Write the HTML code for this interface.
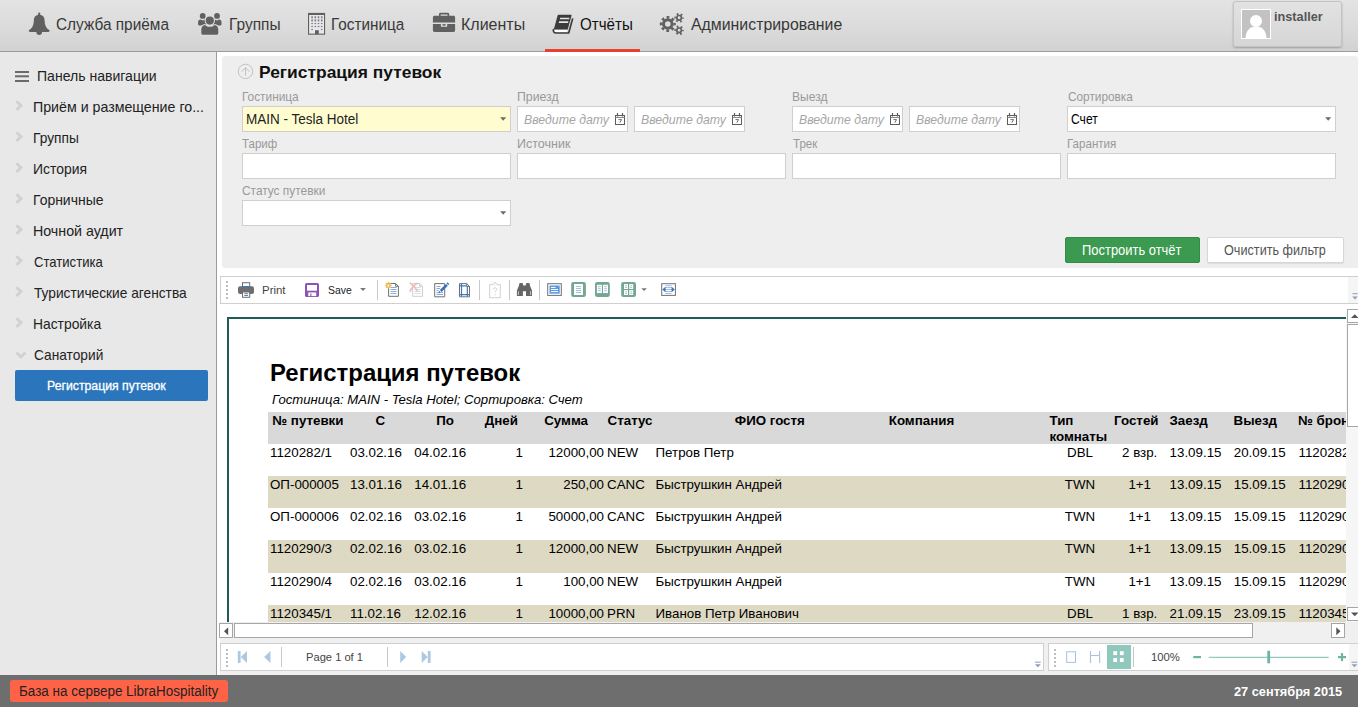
<!DOCTYPE html>
<html lang="ru">
<head>
<meta charset="utf-8">
<title>Регистрация путевок</title>
<style>
html,body{margin:0;padding:0;}
body{width:1358px;height:707px;position:relative;overflow:hidden;background:#fff;font-family:"Liberation Sans",sans-serif;}
.a{position:absolute;box-sizing:border-box;}
.t{position:absolute;white-space:nowrap;line-height:1;transform-origin:0 50%;display:inline-block;}
svg{position:absolute;overflow:visible;}
#topbar{left:0;top:0;width:1358px;height:51px;background:linear-gradient(#e3e3e3,#dcdcdc 50%,#d2d2d2);}
#topline{left:0;top:51px;width:1358px;height:1px;background:#9a9a9a;}
#side{left:0;top:52px;width:216px;height:623px;background:#e8e8e8;}
#sidesep{left:216px;top:52px;width:1px;height:623px;background:#9b9b9b;}
#panel{left:222px;top:56px;width:1136px;height:212px;background:#eeeeee;border-radius:3px 3px 0 3px;}
.inp{background:#fff;border:1px solid #cfcfcf;height:26px;}
.btn{height:25px;border-radius:2px;}
#tb1{left:220px;top:276px;width:1140px;height:28px;background:#fff;border:1px solid #cfcfcf;}
#tbr{left:1348px;top:277px;width:10px;height:26px;background:#f5f5f5;}
#repwrap{left:220px;top:305px;width:1126px;height:317px;background:#fff;overflow:hidden;}
#rep{position:absolute;left:-220px;top:-305px;width:1600px;height:800px;}
#footer{left:0;top:675px;width:1358px;height:32px;background:#6e6e6e;}
.sep{width:1px;background:#c8c8c8;}
.grip{width:2px;background-image:linear-gradient(#bdbdbd 50%,transparent 50%);background-size:2px 4px;}
</style>
</head>
<body>
<div class="a" id="topbar"></div>
<div class="a" id="topline"></div>
<div class="a" style="left:545px;top:49px;width:95px;height:3px;background:#e8402f;"></div>
<div class="a" id="side"></div>
<div class="a" id="sidesep"></div>
<div class="a" id="panel"></div>

<!-- user box -->
<div class="a" style="left:1233px;top:1px;width:109px;height:46px;border:1px solid #c4c4c4;border-radius:3px;background:linear-gradient(#e2e2e2,#d6d6d6);box-shadow:0 1px 2px rgba(0,0,0,.25);"></div>
<div class="a" style="left:1241px;top:9px;width:30px;height:30px;background:#c2c2c2;border:1px solid #fff;overflow:hidden;">
<svg width="28" height="28" viewBox="0 0 28 28" style="left:0;top:0"><circle cx="14" cy="11" r="6" fill="#fff"/><path d="M3.5 28 C4 19 9 16.5 14 16.5 C19 16.5 24 19 24.500 28 Z" fill="#fff"/></svg>
</div>

<!-- sidebar selected -->
<div class="a" style="left:15px;top:370px;width:193px;height:31px;background:#2a75bb;border-radius:2px;"></div>

<!-- inputs -->
<div class="a inp" style="left:242px;top:106px;width:269px;background:#fffdd0;"></div>
<div class="a inp" style="left:517px;top:106px;width:111px;"></div>
<div class="a inp" style="left:634px;top:106px;width:111px;"></div>
<div class="a inp" style="left:792px;top:106px;width:111px;"></div>
<div class="a inp" style="left:909px;top:106px;width:111px;"></div>
<div class="a inp" style="left:1067px;top:106px;width:269px;"></div>
<div class="a inp" style="left:242px;top:153px;width:269px;"></div>
<div class="a inp" style="left:517px;top:153px;width:269px;"></div>
<div class="a inp" style="left:792px;top:153px;width:269px;"></div>
<div class="a inp" style="left:1067px;top:153px;width:269px;"></div>
<div class="a inp" style="left:242px;top:200px;width:269px;"></div>
<div class="a btn" style="left:1065px;top:237px;height:26px;width:135px;background:#3c9a50;border:1px solid #348a46;"></div>
<div class="a btn" style="left:1207px;top:237px;height:26px;width:137px;background:#fff;border:1px solid #d6d6d6;box-shadow:0 1px 1px rgba(0,0,0,.08);"></div>

<!-- toolbar -->
<div class="a" id="tb1"></div>
<div class="a" id="tbr"></div>

<!-- report -->
<div class="a" id="repwrap"><div id="rep">
<div class="a" style="left:227px;top:317px;width:1300px;height:400px;border:2px solid #1f5c54;background:#fff;"></div>
<div class="a" style="left:268px;top:412px;width:1200px;height:32px;background:#d9d9d9;"></div>
<div class="a" style="left:268px;top:476px;width:1200px;height:32px;background:#ddd9c3;"></div>
<div class="a" style="left:268px;top:540px;width:1200px;height:33px;background:#ddd9c3;"></div>
<div class="a" style="left:268px;top:605px;width:1200px;height:32px;background:#ddd9c3;"></div>
<span class="t" style="left:269.99px;top:361.00px;font-size:24px;color:#000;font-weight:700;transform:scaleX(0.9959);">Регистрация путевок</span>
<span class="t" style="left:271.88px;top:393.00px;font-size:13.333px;color:#000;font-style:italic;transform:scaleX(0.9841);">Гостиница: MAIN - Tesla Hotel; Сортировка: Счет</span>
<span class="t" style="left:272.30px;top:414.00px;font-size:13.333px;color:#000;font-weight:700;">№ путевки</span>
<span class="t" style="left:375.38px;top:414.00px;font-size:13.333px;color:#000;font-weight:700;">С</span>
<span class="t" style="left:436.13px;top:414.00px;font-size:13.333px;color:#000;font-weight:700;">По</span>
<span class="t" style="left:484.84px;top:414.00px;font-size:13.333px;color:#000;font-weight:700;">Дней</span>
<span class="t" style="left:544.17px;top:414.00px;font-size:13.333px;color:#000;font-weight:700;">Сумма</span>
<span class="t" style="left:607.60px;top:414.00px;font-size:13.333px;color:#000;font-weight:700;">Статус</span>
<span class="t" style="left:734.75px;top:414.00px;font-size:13.333px;color:#000;font-weight:700;">ФИО гостя</span>
<span class="t" style="left:888.77px;top:414.00px;font-size:13.333px;color:#000;font-weight:700;">Компания</span>
<span class="t" style="left:1049.50px;top:414.00px;font-size:13.333px;color:#000;font-weight:700;">Тип</span>
<span class="t" style="left:1049.50px;top:430.00px;font-size:13.333px;color:#000;font-weight:700;">комнаты</span>
<span class="t" style="left:1114.09px;top:414.00px;font-size:13.333px;color:#000;font-weight:700;">Гостей</span>
<span class="t" style="left:1169.50px;top:414.00px;font-size:13.333px;color:#000;font-weight:700;">Заезд</span>
<span class="t" style="left:1233.50px;top:414.00px;font-size:13.333px;color:#000;font-weight:700;">Выезд</span>
<span class="t" style="left:1298.00px;top:414.00px;font-size:13.333px;color:#000;font-weight:700;">№ брони</span>
<span class="t" style="left:270.00px;top:446.00px;font-size:13.333px;color:#000;">1120282/1</span>
<span class="t" style="left:350.00px;top:446.00px;font-size:13.333px;color:#000;">03.02.16</span>
<span class="t" style="left:414.30px;top:446.00px;font-size:13.333px;color:#000;">04.02.16</span>
<span class="t" style="left:515.58px;top:446.00px;font-size:13.333px;color:#000;">1</span>
<span class="t" style="left:548.41px;top:446.00px;font-size:13.333px;color:#000;">12000,00</span>
<span class="t" style="left:607.00px;top:446.00px;font-size:13.333px;color:#000;">NEW</span>
<span class="t" style="left:655.50px;top:446.00px;font-size:13.333px;color:#000;">Петров Петр</span>
<span class="t" style="left:1067.03px;top:446.00px;font-size:13.333px;color:#000;">DBL</span>
<span class="t" style="left:1122.06px;top:446.00px;font-size:13.333px;color:#000;">2 взр.</span>
<span class="t" style="left:1169.60px;top:446.00px;font-size:13.333px;color:#000;">13.09.15</span>
<span class="t" style="left:1233.80px;top:446.00px;font-size:13.333px;color:#000;">20.09.15</span>
<span class="t" style="left:1298.50px;top:446.00px;font-size:13.333px;color:#000;">1120282</span>
<span class="t" style="left:270.00px;top:478.00px;font-size:13.333px;color:#000;">ОП-000005</span>
<span class="t" style="left:350.00px;top:478.00px;font-size:13.333px;color:#000;">13.01.16</span>
<span class="t" style="left:414.30px;top:478.00px;font-size:13.333px;color:#000;">14.01.16</span>
<span class="t" style="left:515.58px;top:478.00px;font-size:13.333px;color:#000;">1</span>
<span class="t" style="left:563.23px;top:478.00px;font-size:13.333px;color:#000;">250,00</span>
<span class="t" style="left:607.00px;top:478.00px;font-size:13.333px;color:#000;">CANC</span>
<span class="t" style="left:655.50px;top:478.00px;font-size:13.333px;color:#000;">Быструшкин Андрей</span>
<span class="t" style="left:1064.82px;top:478.00px;font-size:13.333px;color:#000;">TWN</span>
<span class="t" style="left:1128.40px;top:478.00px;font-size:13.333px;color:#000;">1+1</span>
<span class="t" style="left:1169.60px;top:478.00px;font-size:13.333px;color:#000;">13.09.15</span>
<span class="t" style="left:1233.80px;top:478.00px;font-size:13.333px;color:#000;">15.09.15</span>
<span class="t" style="left:1298.50px;top:478.00px;font-size:13.333px;color:#000;">1120290</span>
<span class="t" style="left:270.00px;top:510.00px;font-size:13.333px;color:#000;">ОП-000006</span>
<span class="t" style="left:350.00px;top:510.00px;font-size:13.333px;color:#000;">02.02.16</span>
<span class="t" style="left:414.30px;top:510.00px;font-size:13.333px;color:#000;">03.02.16</span>
<span class="t" style="left:515.58px;top:510.00px;font-size:13.333px;color:#000;">1</span>
<span class="t" style="left:548.41px;top:510.00px;font-size:13.333px;color:#000;">50000,00</span>
<span class="t" style="left:607.00px;top:510.00px;font-size:13.333px;color:#000;">CANC</span>
<span class="t" style="left:655.50px;top:510.00px;font-size:13.333px;color:#000;">Быструшкин Андрей</span>
<span class="t" style="left:1064.82px;top:510.00px;font-size:13.333px;color:#000;">TWN</span>
<span class="t" style="left:1128.40px;top:510.00px;font-size:13.333px;color:#000;">1+1</span>
<span class="t" style="left:1169.60px;top:510.00px;font-size:13.333px;color:#000;">13.09.15</span>
<span class="t" style="left:1233.80px;top:510.00px;font-size:13.333px;color:#000;">15.09.15</span>
<span class="t" style="left:1298.50px;top:510.00px;font-size:13.333px;color:#000;">1120290</span>
<span class="t" style="left:270.00px;top:542.00px;font-size:13.333px;color:#000;">1120290/3</span>
<span class="t" style="left:350.00px;top:542.00px;font-size:13.333px;color:#000;">02.02.16</span>
<span class="t" style="left:414.30px;top:542.00px;font-size:13.333px;color:#000;">03.02.16</span>
<span class="t" style="left:515.58px;top:542.00px;font-size:13.333px;color:#000;">1</span>
<span class="t" style="left:548.41px;top:542.00px;font-size:13.333px;color:#000;">12000,00</span>
<span class="t" style="left:607.00px;top:542.00px;font-size:13.333px;color:#000;">NEW</span>
<span class="t" style="left:655.50px;top:542.00px;font-size:13.333px;color:#000;">Быструшкин Андрей</span>
<span class="t" style="left:1064.82px;top:542.00px;font-size:13.333px;color:#000;">TWN</span>
<span class="t" style="left:1128.40px;top:542.00px;font-size:13.333px;color:#000;">1+1</span>
<span class="t" style="left:1169.60px;top:542.00px;font-size:13.333px;color:#000;">13.09.15</span>
<span class="t" style="left:1233.80px;top:542.00px;font-size:13.333px;color:#000;">15.09.15</span>
<span class="t" style="left:1298.50px;top:542.00px;font-size:13.333px;color:#000;">1120290</span>
<span class="t" style="left:270.00px;top:575.00px;font-size:13.333px;color:#000;">1120290/4</span>
<span class="t" style="left:350.00px;top:575.00px;font-size:13.333px;color:#000;">02.02.16</span>
<span class="t" style="left:414.30px;top:575.00px;font-size:13.333px;color:#000;">03.02.16</span>
<span class="t" style="left:515.58px;top:575.00px;font-size:13.333px;color:#000;">1</span>
<span class="t" style="left:563.23px;top:575.00px;font-size:13.333px;color:#000;">100,00</span>
<span class="t" style="left:607.00px;top:575.00px;font-size:13.333px;color:#000;">NEW</span>
<span class="t" style="left:655.50px;top:575.00px;font-size:13.333px;color:#000;">Быструшкин Андрей</span>
<span class="t" style="left:1064.82px;top:575.00px;font-size:13.333px;color:#000;">TWN</span>
<span class="t" style="left:1128.40px;top:575.00px;font-size:13.333px;color:#000;">1+1</span>
<span class="t" style="left:1169.60px;top:575.00px;font-size:13.333px;color:#000;">13.09.15</span>
<span class="t" style="left:1233.80px;top:575.00px;font-size:13.333px;color:#000;">15.09.15</span>
<span class="t" style="left:1298.50px;top:575.00px;font-size:13.333px;color:#000;">1120290</span>
<span class="t" style="left:270.00px;top:607.00px;font-size:13.333px;color:#000;">1120345/1</span>
<span class="t" style="left:350.00px;top:607.00px;font-size:13.333px;color:#000;">11.02.16</span>
<span class="t" style="left:414.30px;top:607.00px;font-size:13.333px;color:#000;">12.02.16</span>
<span class="t" style="left:515.58px;top:607.00px;font-size:13.333px;color:#000;">1</span>
<span class="t" style="left:548.41px;top:607.00px;font-size:13.333px;color:#000;">10000,00</span>
<span class="t" style="left:607.00px;top:607.00px;font-size:13.333px;color:#000;">PRN</span>
<span class="t" style="left:655.50px;top:607.00px;font-size:13.333px;color:#000;">Иванов Петр Иванович</span>
<span class="t" style="left:1067.03px;top:607.00px;font-size:13.333px;color:#000;">DBL</span>
<span class="t" style="left:1122.06px;top:607.00px;font-size:13.333px;color:#000;">1 взр.</span>
<span class="t" style="left:1169.60px;top:607.00px;font-size:13.333px;color:#000;">21.09.15</span>
<span class="t" style="left:1233.80px;top:607.00px;font-size:13.333px;color:#000;">23.09.15</span>
<span class="t" style="left:1298.50px;top:607.00px;font-size:13.333px;color:#000;">1120345</span>
</div></div>

<!-- footer -->
<div class="a" id="footer"></div>
<div class="a" style="left:10px;top:680px;width:218px;height:22px;background:#ff6347;border-radius:3px;"></div>

<!-- ===== top nav icons ===== -->
<svg width="1358" height="52" viewBox="0 0 1358 52" style="left:0;top:0">
<g fill="#606060">
<!-- bell -->
<path d="M39.2 12.6c.6 0 1 .4 1 1v1.100c2.800 .5 4.400 2.600 4.400 5.600c0 5 1.600 8 5.100 10.200c0 .8-.6 1.400-1.400 1.400h-6.200c0 1.700-1.300 3-2.900 3s-2.900-1.300-2.900-3h-6.200c-.8 0-1.400-.6-1.400-1.400c3.500-2.200 5.100-5.200 5.100-10.200c0-3 1.600-5.100 4.400-5.600v-1.100c0-.6 .4-1 1-1z"/>
<!-- users -->
<circle cx="202.700" cy="15.900" r="2.900"/><circle cx="217" cy="15.900" r="2.900"/>
<path d="M198.100 24.200v-2c0-1.500 1-2.500 2.300-2.600c.7 .5 1.500 .8 2.300 .8s1.600-.3 2.300-.8c.5 0 1 .2 1.400 .5v5.500h-6.800c-.9 0-1.500-.6-1.500-1.400z"/>
<path d="M221.500 24.200v-2c0-1.500-1-2.500-2.300-2.600c-.7 .5-1.500 .8-2.300 .8s-1.600-.3-2.300-.8c-.5 0-1 .2-1.400 .5v5.500h6.800c.9 0 1.500-.6 1.500-1.400z"/>
<circle cx="209.800" cy="20.600" r="5.200" fill="#dedede"/>
<path d="M200.300 33v-3.500c0-3.300 1.800-5.400 4.700-5.600c1.300 1.200 3 1.900 4.800 1.900s3.500-.7 4.800-1.900c2.900 .2 4.700 2.300 4.700 5.600v3.500c0 1.800-1.200 2.800-2.900 2.800h-13.200c-1.700 0-2.900-1-2.900-2.800z" fill="#dedede"/>
<circle cx="209.800" cy="20.600" r="4.100"/>
<path d="M201.300 32.900v-3.200c0-2.800 1.400-4.500 3.600-4.800c1.300 1.200 3.100 1.900 4.900 1.900s3.600-.7 4.900-1.900c2.200 .3 3.600 2 3.600 4.800v3.200c0 1.200-.8 1.900-2 1.900h-13c-1.200 0-2-.7-2-1.900z"/>
<!-- building -->
<rect x="308" y="12.900" width="17.100" height="21.800" />
<rect x="309.100" y="15" width="14.900" height="18.600" fill="#e9e9e9"/>
<g fill="#7a7a8a">
<rect x="311.300" y="16.300" width="1.600" height="2"/><rect x="314.500" y="16.300" width="1.600" height="2"/><rect x="317.700" y="16.300" width="1.600" height="2"/><rect x="320.900" y="16.300" width="1.600" height="2"/>
<rect x="311.300" y="19.400" width="1.600" height="2"/><rect x="314.500" y="19.400" width="1.600" height="2"/><rect x="317.700" y="19.400" width="1.600" height="2"/><rect x="320.900" y="19.400" width="1.600" height="2"/>
<rect x="311.300" y="22.900" width="1.600" height="1.200"/><rect x="314.500" y="22.900" width="1.600" height="1.200"/><rect x="317.700" y="22.900" width="1.600" height="1.200"/><rect x="320.900" y="22.900" width="1.600" height="1.200"/>
<rect x="311.300" y="25.900" width="1.600" height="1.200"/><rect x="314.500" y="25.900" width="1.600" height="1.200"/><rect x="317.700" y="25.900" width="1.600" height="1.200"/><rect x="320.900" y="25.900" width="1.600" height="1.200"/>
<rect x="311.300" y="28.900" width="1.600" height="1.200"/><rect x="320.900" y="28.900" width="1.600" height="1.200"/>
</g>
<rect x="315" y="30.200" width="3.800" height="4"/>
<!-- briefcase -->
<path d="M439 16v-1.800c0-.8 .6-1.400 1.400-1.400h7.400c.8 0 1.400 .6 1.400 1.400v1.800h-1.600v-1.100c0-.2-.1-.3-.3-.3h-6.400c-.2 0-.3 .1-.3 .3v1.100z"/>
<path d="M434.500 15.700h19c.9 0 1.600 .7 1.600 1.600v5.300h-22.200v-5.300c0-.9 .7-1.600 1.600-1.600z"/>
<path d="M432.900 24.100h8v2.700h6.300v-2.700h7.900v6.200c0 .9-.7 1.600-1.600 1.600h-19c-.9 0-1.600-.7-1.600-1.600z"/>
<rect x="442.500" y="24.100" width="3.100" height="1.500"/>
<!-- cogs -->
<g fill="none" stroke="#606060">
<circle cx="667.800" cy="24" r="4.300" stroke-width="3"/>
<circle cx="667.800" cy="24" r="6.700" stroke-width="2.600" stroke-dasharray="2.700 2.562" stroke-dashoffset="1.350"/>
<circle cx="679.100" cy="17.800" r="2.300" stroke-width="1.700"/>
<circle cx="679.100" cy="17.800" r="3.800" stroke-width="2" stroke-dasharray="1.700 2.279" stroke-dashoffset=".85"/>
<circle cx="679.100" cy="30.300" r="2.300" stroke-width="1.700"/>
<circle cx="679.100" cy="30.300" r="3.800" stroke-width="2" stroke-dasharray="1.700 2.279" stroke-dashoffset=".85"/>
</g>
</g>
<!-- book (active) -->
<g>
<path d="M558.400 14.800h12.400c.6 0 .9 .4 .7 1l-3.800 13.800h-13.900l3.700-13.800c.2-.6 .5-1 .9-1z" fill="#3c3c3c"/>
<path d="M560.200 17.700h9.300l-.4 1.500h-9.300z M559.200 21.200h9.300l-.5 1.800h-9.300z" fill="#e6e6e6"/>
<path d="M554.600 30h12.700l-.5 1.900h-12.200c-.9-.3-.9-1.600 0-1.900z" fill="#fff"/>
<path d="M572.700 18.400l-4 14.600h-12.400c-2.800 0-3.600-2.400-2.500-3.900" fill="none" stroke="#3c3c3c" stroke-width="1.700" stroke-linejoin="round"/>
</g>
</svg>
<svg width="216" height="400" viewBox="0 0 216 400" style="left:0;top:0">
<g fill="#6a6a6a"><rect x="15" y="71" width="14" height="2"/><rect x="15" y="75.300" width="14" height="2"/><rect x="15" y="80" width="14" height="2"/></g>
<g fill="none" stroke="#d1d1d1" stroke-width="2.800">
<path d="M16.400 101.3l4.700 4.300l-4.700 4.300"/>
<path d="M16.400 132.3l4.700 4.300l-4.700 4.300"/>
<path d="M16.400 163.3l4.700 4.300l-4.700 4.300"/>
<path d="M16.400 194.3l4.700 4.300l-4.700 4.300"/>
<path d="M16.400 225.3l4.700 4.300l-4.700 4.300"/>
<path d="M16.400 256.3l4.700 4.300l-4.700 4.300"/>
<path d="M16.400 287.3l4.700 4.300l-4.700 4.300"/>
<path d="M16.400 318.3l4.700 4.300l-4.700 4.300"/>
<path d="M16.500 352.4l4.500 4.600l4.500-4.600"/>
</g></svg>
<svg width="1358" height="270" viewBox="0 0 1358 270" style="left:0;top:0">
<g fill="none" stroke="#c2c2c2" stroke-width="1"><circle cx="245.500" cy="71.400" r="7.200"/><path d="M245.500 75.600v-7.800M241.600 71.800l3.900-4.100l3.900 4.100"/></g>
<g fill="#6a6a6a"><path d="M500.2 117.2h6l-3 3.600z"/><path d="M1325.2 117.2h6l-3 3.600z"/><path d="M500.2 211.2h6l-3 3.600z"/></g>
<g transform="translate(615 113)" fill="none" stroke="#5c5c5c" stroke-width="1"><rect x=".5" y="2.500" width="9" height="9"/><path d="M.5 4.500h9" stroke="#8a8a8a"/><path d="M2.500 0v3.500M7.500 0v3.500" stroke-width="1.200"/><path d="M3.500 6.600h3l-1.700 3.100" stroke-width=".9"/></g>
<g transform="translate(732 113)" fill="none" stroke="#5c5c5c" stroke-width="1"><rect x=".5" y="2.500" width="9" height="9"/><path d="M.5 4.500h9" stroke="#8a8a8a"/><path d="M2.500 0v3.500M7.500 0v3.500" stroke-width="1.200"/><path d="M3.500 6.600h3l-1.700 3.100" stroke-width=".9"/></g>
<g transform="translate(890 113)" fill="none" stroke="#5c5c5c" stroke-width="1"><rect x=".5" y="2.500" width="9" height="9"/><path d="M.5 4.500h9" stroke="#8a8a8a"/><path d="M2.500 0v3.500M7.500 0v3.500" stroke-width="1.200"/><path d="M3.500 6.600h3l-1.700 3.100" stroke-width=".9"/></g>
<g transform="translate(1007 113)" fill="none" stroke="#5c5c5c" stroke-width="1"><rect x=".5" y="2.500" width="9" height="9"/><path d="M.5 4.500h9" stroke="#8a8a8a"/><path d="M2.500 0v3.500M7.500 0v3.500" stroke-width="1.200"/><path d="M3.500 6.600h3l-1.700 3.100" stroke-width=".9"/></g>
</svg>
<!-- ===== top toolbar icons ===== -->
<div class="a grip" style="left:226px;top:281px;height:18px;"></div>
<div class="a sep" style="left:377px;top:280px;height:20px;"></div>
<div class="a sep" style="left:479px;top:280px;height:20px;"></div>
<div class="a sep" style="left:509px;top:280px;height:20px;"></div>
<div class="a sep" style="left:539px;top:280px;height:20px;"></div>
<svg width="700" height="30" viewBox="0 276 700 30" style="left:0;top:276px">
<!-- printer -->
<rect x="238" y="286.300" width="16" height="7.800" rx="2" fill="#6e6e6e"/>
<rect x="242.500" y="282.700" width="7.200" height="4" fill="#fff" stroke="#6e6e6e"/>
<rect x="242" y="286" width="8.200" height="1" fill="#3c78c0"/>
<rect x="242.500" y="292" width="7.200" height="5.300" fill="#fff" stroke="#6e6e6e"/>
<rect x="244.300" y="293.300" width="3.800" height=".9" fill="#3c78c0"/><rect x="244.300" y="295.100" width="3.800" height=".9" fill="#3c78c0"/>
<!-- save -->
<rect x="305" y="283" width="14" height="14" rx="1.600" fill="#8c52b4"/>
<rect x="307" y="285" width="10" height="5.700" fill="#fff"/>
<rect x="308.300" y="292.400" width="7.900" height="3.700" fill="#fff"/>
<rect x="310.300" y="293.400" width="1.100" height="2.700" fill="#8c52b4"/>
<path d="M360.100 287.900h5.800l-2.900 3.200z" fill="#777"/>
<!-- new page -->
<path d="M388.600 283.500h7l2.800 2.800v10h-9.800z" fill="#fff" stroke="#707070"/>
<path d="M395.600 283.500v2.800h2.800" fill="none" stroke="#707070"/>
<path d="M390.500 287.500h6M390.500 289.500h6M390.500 291.500h6M390.500 293.500h6" stroke="#86abe0" stroke-width="1"/>
<g stroke="#e9b84a" stroke-width="1.400"><path d="M388.400 282.100v6.600M385.100 285.400h6.600M386.100 283.100l4.600 4.600M390.700 283.100l-4.600 4.600"/></g>
<circle cx="388.400" cy="285.400" r="1" fill="#fff"/>
<!-- delete page (disabled) -->
<path d="M412.700 283.500h7l2.800 2.800v10h-9.800z" fill="#fff" stroke="#cfcfcf"/>
<path d="M419.700 283.500v2.800h2.800" fill="none" stroke="#cfcfcf"/>
<path d="M414.600 287.500h6M414.600 289.500h6M414.600 291.500h6M414.600 293.500h6" stroke="#d3def0" stroke-width="1"/>
<path d="M409.600 282.600c3 2 5.800 5 8.200 8.800M417.500 282.900c-3.600 2.200-6.200 5.200-7.700 8.900" fill="none" stroke="#f2bcb3" stroke-width="1.700"/>
<!-- edit page -->
<path d="M434.700 283.600h10v13.200h-10z" fill="#fff" stroke="#707070"/>
<path d="M436.500 286.500h4M436.500 288.500h3.500M436.500 290.500h2M436.500 292.500h2M436.500 294.500h6.500M441 292.500h2" stroke="#86abe0" stroke-width="1"/>
<path d="M447.600 282.300l1.700 1.700l-1.100 1.100l-1.700-1.700z M446 283.900l1.800 1.800l-6.200 6.200l-1.800-1.800z M439.200 290.800l1.700 1.700l-2.700 1z" fill="#3a72b8"/>
<!-- page setup -->
<path d="M459.500 283.600h7.200l2.800 2.800v10.400h-10z" fill="#fff" stroke="#707070"/>
<path d="M466.700 283.600v2.800h2.800" fill="none" stroke="#707070"/>
<path d="M461.500 284v12.500M467.300 286.500v10M460 285.800h6.500M460 294.700h9" stroke="#3c78c8" stroke-width="1.200" fill="none"/>
<!-- clipboard disabled -->
<rect x="489.700" y="284.700" width="10.600" height="13" fill="#fff" stroke="#d2d2d2"/>
<path d="M492.500 284.700c0-1 .8-1 1.300-1c0-1.600 2.400-1.600 2.400 0c.5 0 1.300 0 1.300 1" fill="#fff" stroke="#d2d2d2"/>
<path d="M493.300 289.500c0-2.200 3.400-2.200 3.400-.2c0 1.400-1.700 1.400-1.700 3.200M495 294.200v1.100" fill="none" stroke="#bccfea" stroke-width="1"/>
<!-- binoculars -->
<path d="M519.600 283h2.900l.8 2.600h2.300l.8-2.600h2.900l1 3.400l1.700 4.200v5.300h-6v-4.700h-3.100v4.700h-6v-5.300l1.700-4.200z" fill="#666"/>
<path d="M518.400 291.200v3.800M530.600 291.200v3.800" stroke="#cfcfcf" stroke-width=".9"/>
<!-- icon A -->
<rect x="547.700" y="283.700" width="13.600" height="11.700" fill="#fff" stroke="#707070"/>
<rect x="549.500" y="285.500" width="10.200" height="8.200" fill="#5b9ae0"/>
<path d="M551 287.500h4.500M551 289.500h7M551 291.600h7" stroke="#fff" stroke-width="1"/>
<!-- icon B -->
<rect x="571.200" y="282" width="14.700" height="15" rx="2.200" fill="#72a892"/>
<rect x="574" y="284" width="9" height="11" fill="#fff"/>
<path d="M576 286.500h5M576 288.500h5M576 290.500h5M576 292.500h5" stroke="#a9bfe0" stroke-width="1"/>
<!-- icon C -->
<rect x="595" y="282" width="14.800" height="15" rx="2.200" fill="#72a892"/>
<rect x="596.900" y="284.800" width="5" height="8.300" fill="#fff"/><rect x="603" y="284.800" width="5" height="8.300" fill="#fff"/>
<path d="M598 286.700h2.800M598 288.700h2.800M598 290.700h2.800M604.100 286.700h2.800M604.100 288.700h2.800M604.100 290.700h2.800" stroke="#a9bfe0" stroke-width="1"/>
<!-- icon D -->
<rect x="621.200" y="282" width="14.800" height="15" rx="2.200" fill="#72a892"/>
<rect x="624" y="284.100" width="4" height="4.900" fill="#fff"/><rect x="629.200" y="284.100" width="4" height="4.900" fill="#fff"/>
<rect x="624" y="290.100" width="4" height="4.900" fill="#fff"/><rect x="629.200" y="290.100" width="4" height="4.900" fill="#fff"/>
<path d="M625 285.800h2M625 287.500h2M630.200 285.800h2M630.200 287.500h2M625 291.800h2M625 293.500h2M630.200 291.800h2M630.200 293.500h2" stroke="#a9bfe0" stroke-width=".9"/>
<path d="M641.300 288.200h5.600l-2.800 2.800z" fill="#777"/>
<!-- icon E -->
<rect x="661.700" y="283.700" width="13.700" height="11.700" fill="#fff" stroke="#707070"/>
<path d="M665.500 285.700h6M665 287.600h7M663 289.500h11M665 291.500h7M665.500 293.500h6" stroke="#9dbbe6" stroke-width="1"/>
<path d="M662.300 289.500l3.200-2.700v5.400z M674.800 289.500l-3.200-2.700v5.400z" fill="#3a72b8"/>
</svg>
<!-- overflow marker top toolbar -->
<svg width="10" height="28" viewBox="0 0 10 28" style="left:1348px;top:276px"><path d="M4.500 17.700h5" stroke="#8e9cb8" stroke-width="1"/><path d="M4.300 20.500h5.400l-2.700 3z" fill="#8e9cb8"/></svg>

<!-- ===== scrollbars ===== -->
<div class="a" style="left:220px;top:622px;width:1127px;height:17px;background:#f0f0f0;"></div>
<div class="a" style="left:1346px;top:309px;width:12px;height:313px;background:#f6f6f6;"></div>
<div class="a" style="left:1346px;top:622px;width:12px;height:17px;background:#f0f0f0;"></div>
<div class="a" style="left:1347px;top:309px;width:14px;height:14px;background:#fff;border:1px solid #a6a6a6;"></div>
<div class="a" style="left:1347px;top:324px;width:14px;height:103px;background:#fff;border:1px solid #a6a6a6;"></div>
<div class="a" style="left:1347px;top:607px;width:14px;height:14px;background:#fff;border:1px solid #a6a6a6;"></div>
<div class="a" style="left:219px;top:623px;width:14px;height:15px;background:#fff;border:1px solid #a6a6a6;"></div>
<div class="a" style="left:234px;top:623px;width:1019px;height:15px;background:#fff;border:1px solid #a6a6a6;"></div>
<div class="a" style="left:1331px;top:623px;width:14px;height:15px;background:#fff;border:1px solid #a6a6a6;"></div>
<svg width="1358" height="707" viewBox="0 0 1358 707" style="left:0;top:0;pointer-events:none">
<g fill="#555">
<path d="M1351 318h7.500l-3.700-3.800z"/>
<path d="M1351 612.500h7.500l-3.700 3.800z"/>
<path d="M228.200 627.300v8l-4.200-4z"/>
<path d="M1336.300 627.300v8l4.200-4z"/>
</g>
</svg>

<!-- ===== bottom toolbars ===== -->
<div class="a" style="left:220px;top:639px;width:1138px;height:36px;background:#f0f0f0;"></div>
<div class="a" style="left:220px;top:643px;width:824px;height:28px;background:#fff;border:1px solid #cfcfcf;"></div>
<div class="a" style="left:1048px;top:643px;width:310px;height:28px;background:#fff;border:1px solid #cfcfcf;border-right:0;"></div>
<div class="a" style="left:1349px;top:644px;width:9px;height:26px;background:#f5f5f5;"></div>
<div class="a grip" style="left:226px;top:649px;height:18px;"></div>
<div class="a grip" style="left:1054px;top:649px;height:18px;"></div>
<div class="a sep" style="left:281px;top:647px;height:20px;"></div>
<div class="a sep" style="left:387px;top:647px;height:20px;"></div>
<div class="a sep" style="left:1133px;top:647px;height:20px;"></div>
<div class="a" style="left:1107px;top:645px;width:24px;height:24px;background:#8fc9bd;"></div>
<svg width="1358" height="36" viewBox="0 640 1358 36" style="left:0;top:640px">
<g fill="#afc8e2">
<rect x="237.800" y="651" width="2.800" height="12"/><path d="M247 651v12l-6.300-6z"/>
<path d="M270.500 651v12l-6.400-6z"/>
<path d="M400.200 651v12l6-6z"/>
<path d="M421.700 651v12l6-6z"/><rect x="427.800" y="651" width="2.800" height="12"/>
</g>
<path d="M1035 662.200h5.800" stroke="#8e9cb8" stroke-width="1"/><path d="M1035 664.300h5.800l-2.900 3z" fill="#8e9cb8"/>
<path d="M1351.500 662.200h5.800" stroke="#8e9cb8" stroke-width="1"/><path d="M1351.500 664.300h5.800l-2.900 3z" fill="#8e9cb8"/>
<rect x="1066.700" y="651.800" width="8.800" height="10.600" fill="none" stroke="#a9c1e3"/>
<path d="M1090.500 651v12M1099.600 651v12M1090.500 655.500h9" fill="none" stroke="#a9c1e3" stroke-width="1.100"/>
<g fill="#fff"><rect x="1113.300" y="651.200" width="3.800" height="3.900"/><rect x="1119.900" y="651.200" width="3.800" height="3.900"/><rect x="1113.300" y="658" width="3.800" height="4"/><rect x="1119.900" y="658" width="3.800" height="4"/></g>
<rect x="1193.300" y="656" width="7.700" height="2.200" fill="#6fb3a4"/>
<rect x="1208.700" y="656.800" width="120" height="1" fill="#7abcae"/>
<rect x="1267.300" y="650.800" width="2.800" height="12.500" fill="#6fb3a4"/>
<rect x="1338" y="656" width="8" height="2.200" fill="#6fb3a4"/><rect x="1340.900" y="653.100" width="2.200" height="8" fill="#6fb3a4"/>
</svg>


<span class="t" style="left:55.92px;top:16.00px;font-size:17.2px;color:#383838;transform:scaleX(0.8956);">Служба приёма</span>
<span class="t" style="left:228.70px;top:16.00px;font-size:17.2px;color:#383838;transform:scaleX(0.8995);">Группы</span>
<span class="t" style="left:330.74px;top:16.00px;font-size:17.2px;color:#383838;transform:scaleX(0.8895);">Гостиница</span>
<span class="t" style="left:461.06px;top:16.00px;font-size:17.2px;color:#383838;transform:scaleX(0.9309);">Клиенты</span>
<span class="t" style="left:579.51px;top:16.00px;font-size:17.2px;color:#111;transform:scaleX(0.8807);">Отчёты</span>
<span class="t" style="left:691.35px;top:16.00px;font-size:17.2px;color:#383838;transform:scaleX(0.9230);">Администрирование</span>
<span class="t" style="left:1274.18px;top:10.00px;font-size:13px;color:#555;font-weight:700;transform:scaleX(0.9779);">installer</span>
<span class="t" style="left:36.60px;top:68.00px;font-size:15px;color:#222;transform:scaleX(0.9363);">Панель навигации</span>
<span class="t" style="left:33.04px;top:99.00px;font-size:15px;color:#222;transform:scaleX(0.9469);">Приём и размещение го...</span>
<span class="t" style="left:33.09px;top:130.00px;font-size:15px;color:#222;transform:scaleX(0.9163);">Группы</span>
<span class="t" style="left:33.06px;top:161.00px;font-size:15px;color:#222;transform:scaleX(0.9296);">История</span>
<span class="t" style="left:33.06px;top:192.00px;font-size:15px;color:#222;transform:scaleX(0.9307);">Горничные</span>
<span class="t" style="left:33.00px;top:223.00px;font-size:15px;color:#222;transform:scaleX(0.9484);">Ночной аудит</span>
<span class="t" style="left:33.65px;top:254.00px;font-size:15px;color:#222;transform:scaleX(0.8730);">Статистика</span>
<span class="t" style="left:34.00px;top:285.00px;font-size:15px;color:#222;transform:scaleX(0.9149);">Туристические агенства</span>
<span class="t" style="left:33.11px;top:316.00px;font-size:15px;color:#222;transform:scaleX(0.9225);">Настройка</span>
<span class="t" style="left:33.57px;top:347.00px;font-size:15px;color:#222;transform:scaleX(0.9145);">Санаторий</span>
<span class="t" style="left:46.54px;top:380.00px;font-size:12.2px;color:#fff;transform:scaleX(1.0055);-webkit-text-stroke:0.3px #fff;">Регистрация путевок</span>
<span class="t" style="left:258.51px;top:64.00px;font-size:16.4px;color:#111;font-weight:700;transform:scaleX(1.0624);">Регистрация путевок</span>
<span class="t" style="left:241.98px;top:91.00px;font-size:12.8px;color:#999;transform:scaleX(0.9250);">Гостиница</span>
<span class="t" style="left:516.95px;top:91.00px;font-size:12.8px;color:#999;transform:scaleX(0.9598);">Приезд</span>
<span class="t" style="left:792.45px;top:91.00px;font-size:12.8px;color:#999;transform:scaleX(0.9429);">Выезд</span>
<span class="t" style="left:1067.90px;top:91.00px;font-size:12.8px;color:#999;transform:scaleX(0.9223);">Сортировка</span>
<span class="t" style="left:242.22px;top:138.00px;font-size:12.8px;color:#999;transform:scaleX(0.8988);">Тариф</span>
<span class="t" style="left:516.90px;top:138.00px;font-size:12.8px;color:#999;transform:scaleX(0.9773);">Источник</span>
<span class="t" style="left:792.71px;top:138.00px;font-size:12.8px;color:#999;transform:scaleX(0.9038);">Трек</span>
<span class="t" style="left:1067.07px;top:138.00px;font-size:12.8px;color:#999;transform:scaleX(0.9043);">Гарантия</span>
<span class="t" style="left:242.35px;top:185.00px;font-size:12.8px;color:#999;transform:scaleX(0.9284);">Статус путевки</span>
<span class="t" style="left:245.63px;top:112.00px;font-size:14px;color:#222;transform:scaleX(0.9645);">MAIN - Tesla Hotel</span>
<span class="t" style="left:1071.35px;top:112.00px;font-size:14px;color:#000;transform:scaleX(0.8643);">Счет</span>
<span class="t" style="left:524.01px;top:113.00px;font-size:13.6px;color:#a6a6a6;font-style:italic;transform:scaleX(0.9043);">Введите дату</span>
<span class="t" style="left:641.01px;top:113.00px;font-size:13.6px;color:#a6a6a6;font-style:italic;transform:scaleX(0.9043);">Введите дату</span>
<span class="t" style="left:799.01px;top:113.00px;font-size:13.6px;color:#a6a6a6;font-style:italic;transform:scaleX(0.9043);">Введите дату</span>
<span class="t" style="left:916.01px;top:113.00px;font-size:13.6px;color:#a6a6a6;font-style:italic;transform:scaleX(0.9043);">Введите дату</span>
<span class="t" style="left:1082.32px;top:244.00px;font-size:13.8px;color:#fff;transform:scaleX(0.9378);">Построить отчёт</span>
<span class="t" style="left:1224.36px;top:244.00px;font-size:13.8px;color:#555;transform:scaleX(0.9172);">Очистить фильтр</span>
<span class="t" style="left:262.08px;top:285.00px;font-size:11px;color:#444;transform:scaleX(1.0397);">Print</span>
<span class="t" style="left:328.13px;top:285.00px;font-size:11px;color:#222;transform:scaleX(0.9484);">Save</span>
<span class="t" style="left:306.10px;top:652.00px;font-size:11px;color:#444;transform:scaleX(1.0132);">Page 1 of 1</span>
<span class="t" style="left:1150.55px;top:652.00px;font-size:11px;color:#444;transform:scaleX(1.0259);">100%</span>
<span class="t" style="left:19.15px;top:684.00px;font-size:14px;color:#222;transform:scaleX(0.9613);">База на сервере LibraHospitality</span>
<span class="t" style="left:1234.09px;top:685.00px;font-size:13.6px;color:#fff;font-weight:700;transform:scaleX(0.9384);">27 сентября 2015</span>
</body>
</html>
